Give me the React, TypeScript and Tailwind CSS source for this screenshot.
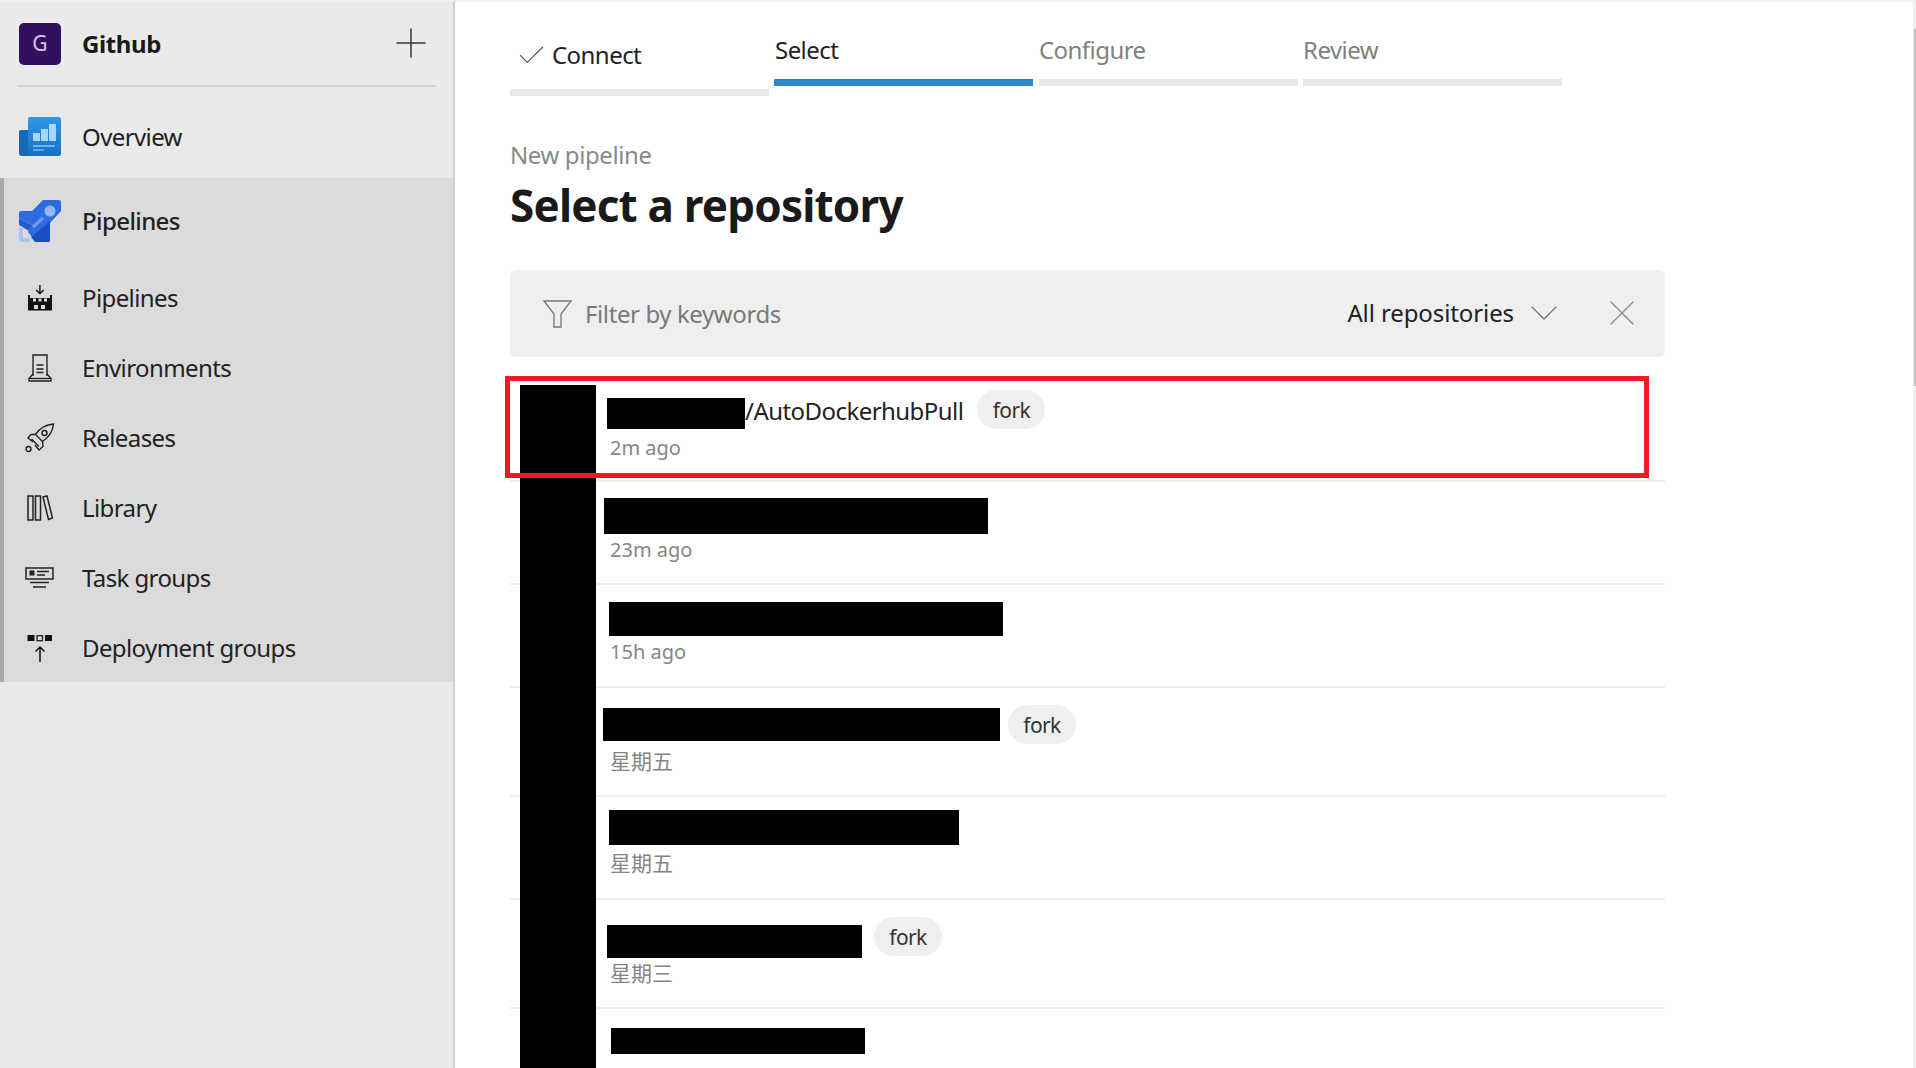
import { Check, ChevronDown, Plus, X } from "lucide-react"

const FONT = "font-['Noto_Sans','Noto_Sans_CJK_SC',sans-serif]"

const OverviewIcon = () => (
  <svg width="42" height="40" viewBox="0 0 42 40">
    <defs>
      <linearGradient id="ov" x1="0" y1="0" x2="0" y2="1">
        <stop offset="0" stopColor="#3197e6" />
        <stop offset="1" stopColor="#1670c6" />
      </linearGradient>
    </defs>
    <path d="M2 13h10v26H3a3 3 0 0 1-3-3V15a2 2 0 0 1 2-2z" fill="#1669b8" />
    <path d="M9 2a2 2 0 0 1 2-2h29a2 2 0 0 1 2 2v35a2 2 0 0 1-2 2H5c3 0 4-2 4-4z" fill="url(#ov)" />
    <path d="M14 16h7v8h-7zM22 12h7v12h-7zM30 7h7v17h-7z" fill="#a9d5f8" />
    <path d="M14 28h22v2H14z" fill="#6db5ee" />
    <path d="M14 32h11v2H14z" fill="#5ea8e6" />
  </svg>
)

const PipelinesLogo = () => (
  <svg width="42" height="42" viewBox="0 0 42 42">
    <path d="M24 0h16a2 2 0 0 1 2 2v9L31 23v17a2 2 0 0 1-2 2H17L9 32l5-6-14-8v-5a2 2 0 0 1 2-2h11z" fill="#2f6be0" />
    <path d="M31 21v19a2 2 0 0 1-2 2H16l-4-5 11-9z" fill="#1a4ec2" />
    <path d="M0 18l14 8-4 5-10-6z" fill="#245cd0" />
    <circle cx="31" cy="11" r="5.5" fill="#97b6f4" />
    <path d="M14 27L24 18" stroke="#6f97ef" strokeWidth="3.5" />
    <path d="M0 28h4v10h7v4H2a2 2 0 0 1-2-2z" fill="#adc3f2" />
  </svg>
)

const FactoryIcon = () => (
  <svg width="26" height="26" viewBox="0 0 26 26" fill="#111">
    <path d="M12.2 0h1.4v7l2.6-2.4 1 1-4.3 4-4.3-4 1-1 2.6 2.4z" />
    <path fillRule="evenodd" d="M1 10h2v3h20v-3h2v15.5H1zM6 13.500h3v3H6zM11.500 13.500h3v3h-3zM17 13.500h3v3h-3zM7 20h4v4H7zM14 20h4v4h-4z" />
  </svg>
)

const EnvironmentIcon = () => (
  <svg width="26" height="28" viewBox="0 0 26 28" fill="none" stroke="#222" strokeWidth="1.4">
    <path d="M6 22V1h14v21" />
    <path d="M9.500 11h7M9.500 15h7M9.500 18.500h7" />
    <path d="M6 20l-4 4.500v2.500h22v-2.500L20 20" />
    <path d="M2 24.500h22" />
  </svg>
)

const ReleasesIcon = () => (
  <svg width="30" height="30" viewBox="0 0 30 30" fill="none" stroke="#222" strokeWidth="1.4">
    <path d="M28.500 1C21 1.500 15 5 10.500 11.500l7 7C24 14 28 8 28.500 1z" />
    <circle cx="19.500" cy="10" r="2.500" />
    <path d="M10.500 11.500H6L3 15l5 4" />
    <path d="M17.500 18.500l.5 5-4 3.500-4-5" />
    <path d="M6.500 16l7.500 7.500" />
    <circle cx="3.500" cy="26" r="2.500" />
  </svg>
)

const LibraryIcon = () => (
  <svg width="26" height="26" viewBox="0 0 26 26" fill="none" stroke="#222" strokeWidth="1.5">
    <rect x="1" y="1" width="5" height="24" />
    <rect x="8.500" y="1" width="5" height="24" />
    <path d="M16 2l4-1 5.500 22-4 1.500z" />
  </svg>
)

const TaskGroupsIcon = () => (
  <svg width="30" height="22" viewBox="0 0 30 22" fill="none" stroke="#222" strokeWidth="1.5">
    <rect x="1" y="1" width="27" height="11" />
    <rect x="5" y="4" width="4" height="4" fill="#222" strokeWidth="1" />
    <path d="M12 4.500h12M12 8h8M5 15.500h19M8 20h13" />
  </svg>
)

const DeploymentIcon = () => (
  <svg width="26" height="27" viewBox="0 0 26 27" fill="none">
    <rect x="0.500" y="0" width="7" height="6" fill="#111" />
    <rect x="10" y="0.700" width="5.500" height="5" stroke="#222" strokeWidth="1.300" />
    <rect x="18" y="0" width="7" height="6" fill="#111" />
    <path d="M13 27V12M8.500 16.500L13 12l4.500 4.500" stroke="#111" strokeWidth="1.500" />
  </svg>
)

const FilterIcon = () => (
  <svg width="29" height="28" viewBox="0 0 29 28" fill="none" stroke="#777" strokeWidth="1.300">
    <path d="M1 1h27L18 14v13h-7V14z" />
  </svg>
)

const NAV = [
  { label: "Pipelines", icon: <FactoryIcon /> },
  { label: "Environments", icon: <EnvironmentIcon /> },
  { label: "Releases", icon: <ReleasesIcon /> },
  { label: "Library", icon: <LibraryIcon /> },
  { label: "Task groups", icon: <TaskGroupsIcon /> },
  { label: "Deployment groups", icon: <DeploymentIcon /> },
]

const Fork = () => (
  <span className="flex h-[39px] w-[68px] shrink-0 items-center justify-center rounded-[20px] bg-[#efefef] pt-[2px] text-[21px] tracking-[-0.6px] text-[#333]">fork</span>
)

const Date = ({ className, children }: { className: string; children: string }) => (
  <p className={`ml-[100px] h-[28px] leading-[28px] text-[#858585] ${className}`}>{children}</p>
)

export default function App() {
  return (
    <div className={`${FONT} relative flex h-[1068px] w-[1916px] overflow-hidden bg-white text-[#222]`}>
      <aside className="h-full w-[455px] shrink-0 border-r-2 border-t-2 border-r-[#cfcfcf] border-t-[#efefef] bg-[#eaeaea]">
        <div className="flex h-[83px] items-center pl-[19px]">
          <div className="flex h-[42px] w-[42px] items-center justify-center rounded-[5px] bg-[#32105f] text-[21px] text-[#d9c6ee]">G</div>
          <span className="ml-[21px] text-[24px] font-bold tracking-[-0.4px] text-[#1a1a1a]">Github</span>
          <Plus className="ml-auto mb-[2px] mr-[18px] h-[48px] w-[48px] text-[#333]" strokeWidth={0.75} />
        </div>
        <div className="mx-[17px] h-[2px] bg-[#d2d2d2]" />
        <div className="flex h-[91px] items-center gap-[21px] pl-[19px] pt-[9px] text-[24px] tracking-[-0.6px]">
          <OverviewIcon />
          <span>Overview</span>
        </div>
        <div className="h-[504px] overflow-hidden border-l-4 border-l-[#a9a9a9] bg-[#dbdbdb] tracking-[-0.6px]">
          <div className="flex h-[85px] items-center gap-[21px] pl-[15px] text-[24px] font-medium">
            <PipelinesLogo />
            <span>Pipelines</span>
          </div>
          {NAV.map((item) => (
            <div key={item.label} className="flex h-[70px] items-center gap-[21px] pl-[15px] text-[24px]">
              <div className="flex w-[42px] justify-center">{item.icon}</div>
              <span>{item.label}</span>
            </div>
          ))}
        </div>
      </aside>

      <main className="relative flex-1 border-t-2 border-t-[#efefef] pl-[55px]">
        <div className="flex gap-[5px] text-[24px] tracking-[-0.55px]">
          <div className="w-[259px]">
            <div className="mt-[33px] flex h-[40px] items-center pl-[5px]">
              <Check className="h-[33px] w-[33px] text-[#555]" strokeWidth={0.8} />
              <span className="ml-[4px]">Connect</span>
            </div>
            <div className="mt-[14px] h-[7px] bg-[#e9e9e9]" />
          </div>
          <div className="w-[259px]">
            <div className="mt-[28px] flex h-[40px] items-center pl-[1px]">Select</div>
            <div className="mt-[9px] h-[7px] bg-[#2e86d1]" />
          </div>
          <div className="ml-[1px] w-[259px]">
            <div className="mt-[28px] flex h-[40px] items-center text-[#808080]">Configure</div>
            <div className="mt-[9px] h-[7px] bg-[#e9e9e9]" />
          </div>
          <div className="w-[259px]">
            <div className="mt-[28px] flex h-[40px] items-center text-[#808080]">Review</div>
            <div className="mt-[9px] h-[7px] bg-[#e9e9e9]" />
          </div>
        </div>

        <p className="mt-[42px] h-[34px] text-[24px] leading-[34px] tracking-[-0.4px] text-[#8a8a8a]">New pipeline</p>
        <h1 className="mt-[3px] h-[60px] text-[44px] font-bold leading-[60px] tracking-[-0.8px] text-[#1a1a1a]">Select a repository</h1>

        <div className="mt-[35px] flex h-[87px] w-[1155px] items-center rounded-[6px] bg-[#efefef] pl-[33px]">
          <FilterIcon />
          <span className="ml-[13px] text-[24px] tracking-[-0.4px] text-[#7a7a7a]">Filter by keywords</span>
          <span className="mb-[2px] ml-auto text-[24px] tracking-[-0.1px] text-[#222]">All repositories</span>
          <ChevronDown className="mb-[2px] ml-[6px] h-[48px] w-[48px] text-[#777]" strokeWidth={0.7} />
          <X className="mb-[2px] ml-[32px] mr-[21px] h-[44px] w-[44px] text-[#8f8f8f]" strokeWidth={0.75} />
        </div>

        <div className="mt-[20px] w-[1155px]">
          <div className="h-[105px] border-b-2 border-b-[#eeeeee] pt-[13px]">
            <div className="flex h-[39px] items-center text-[24px] tracking-[-0.55px]">
              <div className="ml-[97px] h-[31px] w-[138px] self-end bg-black" />
              <span className="mt-[2px] text-[#222]">/AutoDockerhubPull</span>
              <div className="ml-[14px]"><Fork /></div>
            </div>
            <Date className="mt-[5px] text-[20px]">2m ago</Date>
          </div>
          <div className="h-[103px] border-b-2 border-b-[#eeeeee] pt-[16px]">
            <div className="ml-[94px] h-[36px] w-[384px] bg-black" />
            <Date className="mt-[2px] text-[20px]">23m ago</Date>
          </div>
          <div className="h-[103px] border-b-2 border-b-[#eeeeee] pt-[17px]">
            <div className="ml-[99px] h-[34px] w-[394px] bg-black" />
            <Date className="mt-[2px] text-[20px]">15h ago</Date>
          </div>
          <div className="h-[109px] border-b-2 border-b-[#eeeeee] pt-[17px]">
            <div className="flex h-[39px] items-center">
              <div className="ml-[93px] h-[33px] w-[397px] bg-black" />
              <div className="ml-[8px]"><Fork /></div>
            </div>
            <Date className="mt-[3px] text-[21px]">星期五</Date>
          </div>
          <div className="h-[103px] border-b-2 border-b-[#eeeeee] pt-[13px]">
            <div className="ml-[99px] h-[35px] w-[350px] bg-black" />
            <Date className="mt-[4px] text-[21px]">星期五</Date>
          </div>
          <div className="h-[109px] border-b-2 border-b-[#eeeeee] pt-[17px]">
            <div className="flex h-[39px]">
              <div className="ml-[97px] mt-[8px] h-[33px] w-[255px] bg-black" />
              <div className="ml-[12px]"><Fork /></div>
            </div>
            <Date className="mt-[3px] text-[21px]">星期三</Date>
          </div>
          <div className="pt-[19px]">
            <div className="ml-[101px] h-[26px] w-[254px] bg-black" />
            <Date className="mt-[9px] text-[21px]">星期二</Date>
          </div>
        </div>

        {/* redaction bar and the annotation box sit over the list */}
        <div className="absolute bottom-0 left-[65px] top-[383px] w-[76px] bg-black" />
        <div className="absolute left-[50px] top-[374px] h-[102px] w-[1144px] border-[5px] border-[#ed1c24]" />
        <div className="absolute right-0 top-0 h-full w-[3px] bg-[#f0f0f0]">
          <div className="ml-[1px] mt-[27px] h-[357px] w-[2px] bg-[#c2c2c2]" />
        </div>
      </main>
    </div>
  )
}
